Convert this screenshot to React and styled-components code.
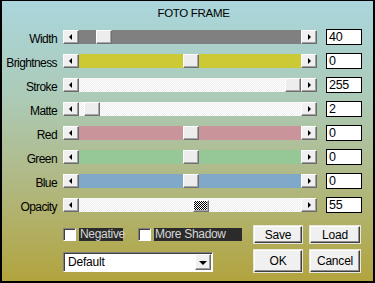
import React from "react";
import styled, { createGlobalStyle } from "styled-components";

const GlobalStyle = createGlobalStyle`
  html, body {
    margin: 0;
    padding: 0;
    background: #b0b890;
  }
  * {
    box-sizing: border-box;
  }
`;

const Window = styled.div`
  width: 375px;
  height: 283px;
  border: 2px solid #000;
  border-top-width: 1px;
  padding-top: 5px;
  background: linear-gradient(
    180deg,
    #aad6dd 0%,
    #accab6 35%,
    #b0ba88 62%,
    #b2a43e 100%
  );
  font-family: "Liberation Sans", Arial, sans-serif;
  font-size: 12px;
  letter-spacing: -0.6px;
  color: #000;
`;

const Title = styled.div`
  height: 15px;
  line-height: 15px;
  text-align: center;
  font-size: 11.5px;
  letter-spacing: -0.3px;
  padding-left: 12px;
`;

const Rows = styled.div`
  display: flex;
  flex-direction: column;
  gap: 8px;
  margin-top: 8px;
`;

const Row = styled.div`
  display: flex;
  align-items: center;
  height: 16px;
`;

const Label = styled.div`
  width: 55px;
  text-align: right;
  padding-top: 4px;
`;

const Slider = styled.div`
  display: flex;
  align-self: flex-end;
  width: 254px;
  height: 14px;
  margin-left: 6px;
  margin-bottom: 1px;
`;

const ArrowButton = styled.div`
  display: flex;
  align-items: center;
  justify-content: center;
  width: 16px;
  height: 14px;
  flex: none;
  background: #f0f0f0;
  border-top: 1px solid #fff;
  border-left: 1px solid #fff;
  border-right: 1px solid #6a6a6a;
  border-bottom: 1px solid #6a6a6a;
  box-shadow: inset -1px -1px 0 #a0a0a0;
`;

const Triangle = styled.span`
  width: 0;
  height: 0;
  border-top: 3px solid transparent;
  border-bottom: 3px solid transparent;
  ${(p) =>
    p.$dir === "left"
      ? "border-right: 3px solid #000; margin-right: 1px;"
      : "border-left: 3px solid #000; margin-left: 1px;"}
`;

const Track = styled.div`
  position: relative;
  flex: 1;
  height: 14px;
  background: ${(p) =>
    p.$color
      ? p.$color
      : "repeating-conic-gradient(#ffffff 0 25%, #ededed 0 50%) 0 0 / 2px 2px"};
`;

const Thumb = styled.div`
  position: absolute;
  bottom: 0;
  width: 16px;
  height: ${(p) => (p.$checker ? "12px" : "14px")};
  background: ${(p) =>
    p.$checker
      ? "repeating-conic-gradient(#000 0 25%, #fff 0 50%) 0 0 / 2px 2px"
      : "#ededed"};
  border-top: 1px solid #fff;
  border-left: 1px solid #fff;
  border-right: 1px solid #707070;
  border-bottom: 1px solid #707070;
  box-shadow: inset -1px -1px 0 #a8a8a8;
`;

const ValueBox = styled.div`
  width: 36px;
  height: 16px;
  margin-left: 9px;
  background: #fff;
  border: 1px solid #000;
  padding-left: 2px;
  line-height: 14px;
  font-size: 12.5px;
  letter-spacing: -0.3px;
`;

const Bottom = styled.div`
  display: grid;
  grid-template-columns: 183px 48px 50px;
  grid-template-rows: 17px 22px;
  column-gap: 8px;
  row-gap: 7px;
  margin-top: 13px;
  margin-left: 61px;
`;

const Checks = styled.div`
  display: flex;
  align-items: center;
`;

const CheckItem = styled.label`
  display: flex;
  align-items: center;
  gap: 3px;
  margin-right: ${(p) => p.$gap || 0}px;
`;

const CheckBox = styled.span`
  width: 13px;
  height: 13px;
  background: #fff;
  border-top: 1px solid #808080;
  border-left: 1px solid #808080;
  border-right: 1px solid #fff;
  border-bottom: 1px solid #fff;
  box-shadow: inset 1px 1px 0 #404040;
`;

const CheckText = styled.span`
  display: block;
  width: ${(p) => p.$width}px;
  height: 13px;
  line-height: 13px;
  background: #2b2b2b;
  color: #d6d6d6;
  padding-left: 1px;
  letter-spacing: -0.3px;
`;

const Button = styled.div`
  display: flex;
  align-items: center;
  justify-content: center;
  background: #f0f0f0;
  border-top: 1px solid #fff;
  border-left: 1px solid #fff;
  border-right: 1px solid #404040;
  border-bottom: 1px solid #404040;
  box-shadow: inset -1px -1px 0 #909090, 0 0 0 1px #e8e8e0;
  font-size: 12px;
  letter-spacing: -0.2px;
`;

const Select = styled.div`
  display: flex;
  align-items: center;
  justify-content: space-between;
  width: 150px;
  height: 20px;
  margin-top: 2px;
  background: #fff;
  border-top: 1px solid #808080;
  border-left: 1px solid #808080;
  border-right: 1px solid #fff;
  border-bottom: 1px solid #fff;
  box-shadow: inset 1px 1px 0 #404040;
  padding: 0 1px 0 4px;
  letter-spacing: -0.2px;
`;

const SelectButton = styled(ArrowButton)`
  width: 16px;
  height: 16px;
`;

const DownTriangle = styled.span`
  width: 0;
  height: 0;
  border-left: 4px solid transparent;
  border-right: 4px solid transparent;
  border-top: 4px solid #000;
  margin-top: 1px;
`;

const TRACK_RANGE = 207;

const sliders = [
  { label: "Width", value: "40", pos: 0.082, color: "#808080" },
  { label: "Brightness", value: "0", pos: 0.5, color: "#cbc934" },
  { label: "Stroke", value: "255", pos: 0.995 },
  { label: "Matte", value: "2", pos: 0.025 },
  { label: "Red", value: "0", pos: 0.5, color: "#c9959a" },
  { label: "Green", value: "0", pos: 0.5, color: "#95c896" },
  { label: "Blue", value: "0", pos: 0.5, color: "#80a8c8" },
  { label: "Opacity", value: "55", pos: 0.55, checker: true },
];

const App = () => {
  return (
    <>
      <GlobalStyle />
      <Window>
        <Title>FOTO FRAME</Title>
        <Rows>
          {sliders.map((s) => (
            <Row key={s.label}>
              <Label>{s.label}</Label>
              <Slider>
                <ArrowButton>
                  <Triangle $dir="left" />
                </ArrowButton>
                <Track $color={s.color}>
                  <Thumb
                    $checker={s.checker}
                    style={{ left: Math.round(s.pos * TRACK_RANGE) }}
                  />
                </Track>
                <ArrowButton>
                  <Triangle $dir="right" />
                </ArrowButton>
              </Slider>
              <ValueBox>{s.value}</ValueBox>
            </Row>
          ))}
        </Rows>
        <Bottom>
          <Checks>
            <CheckItem $gap={15}>
              <CheckBox />
              <CheckText $width={44}>Negative</CheckText>
            </CheckItem>
            <CheckItem>
              <CheckBox />
              <CheckText $width={88}>More Shadow</CheckText>
            </CheckItem>
          </Checks>
          <Button>Save</Button>
          <Button>Load</Button>
          <Select>
            <span>Default</span>
            <SelectButton>
              <DownTriangle />
            </SelectButton>
          </Select>
          <Button>OK</Button>
          <Button>Cancel</Button>
        </Bottom>
      </Window>
    </>
  );
};

export default App;
